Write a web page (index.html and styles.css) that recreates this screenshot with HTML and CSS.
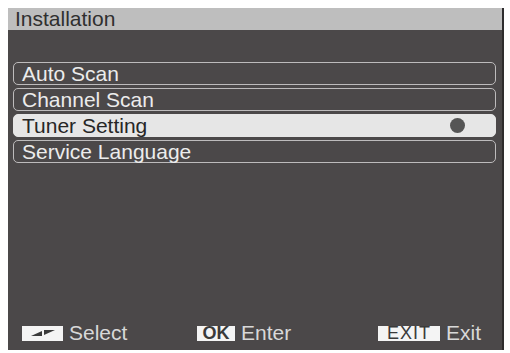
FILE: index.html
```html
<!DOCTYPE html>
<html lang="en">
<head>
    <meta charset="UTF-8">
    <title>Installation</title>
    <link rel="stylesheet" href="styles.css">
</head>
<body>
    <div class="screen">
        <div class="title">Installation</div>
        <div class="menu">
            <div class="item">Auto Scan</div>
            <div class="item">Channel Scan</div>
            <div class="item active">Tuner Setting <span class="dot"></span></div>
            <div class="item">Service Language</div>
        </div>
        <div class="footer">
            <div class="hint hint-select">
                <span class="key key-arrows">
                    <svg width="26" height="8" viewBox="0 0 26 8">
                        <polygon points="1,7 12,7 12,2" fill="#3a3a3a"/>
                        <polygon points="14,1 25,1 14,6" fill="#3a3a3a"/>
                    </svg>
                </span>
                <span>Select</span>
            </div>
            <div class="hint hint-ok">
                <span class="key key-ok">OK</span>
                <span>Enter</span>
            </div>
            <div class="hint">
                <span class="key key-exit">EXIT</span>
                <span>Exit</span>
            </div>
        </div>
    </div>
</body>
</html>
```

FILE: styles.css
```css
body {
    margin: 0;
    background-color: #fff;
    font-family: "Liberation Sans", Arial, sans-serif;
}
.screen {
    margin: 8px 0 0 8px;
    width: 494px;
    height: 342px;
    background-color: #4b4849;
    border-right: 2px solid #2e2c2d;
    display: flex;
    flex-direction: column;
}
.title {
    height: 22px;
    line-height: 22px;
    background-color: #bebebe;
    color: #2f2f2f;
    font-size: 21px;
    padding-left: 7px;
}
.menu {
    padding: 32px 6px 0 5px;
    display: flex;
    flex-direction: column;
    gap: 3px;
}
.item {
    height: 21px;
    line-height: 21px;
    border: 1px solid #bdbbbc;
    border-radius: 5px;
    color: #ececec;
    font-size: 21px;
    padding-left: 8px;
    display: flex;
    align-items: center;
}
.item.active {
    background-color: #e6e6e6;
    border-color: #e6e6e6;
    color: #262626;
}
.dot {
    width: 15px;
    height: 15px;
    border-radius: 50%;
    background-color: #555;
    margin-left: auto;
    margin-right: 30px;
}
.footer {
    margin-top: auto;
    height: 24px;
    display: flex;
    align-items: flex-start;
    color: #d8d8d8;
    font-size: 21px;
    padding: 0 0 4px 14px;
}
.hint {
    display: flex;
    align-items: center;
    gap: 6px;
    height: 22px;
}
.hint-select {
    width: 175px;
}
.hint-ok {
    width: 181px;
}
.key {
    background-color: #f4f4f4;
    color: #3a3a3a;
    font-size: 17px;
    height: 15px;
    line-height: 15px;
    display: flex;
    align-items: center;
    justify-content: center;
}
.key-arrows {
    width: 41px;
}
.key-ok {
    width: 38px;
    font-size: 18px;
    font-weight: bold;
}
.key-exit {
    width: 62px;
    font-size: 18px;
    letter-spacing: 1px;
}
```
